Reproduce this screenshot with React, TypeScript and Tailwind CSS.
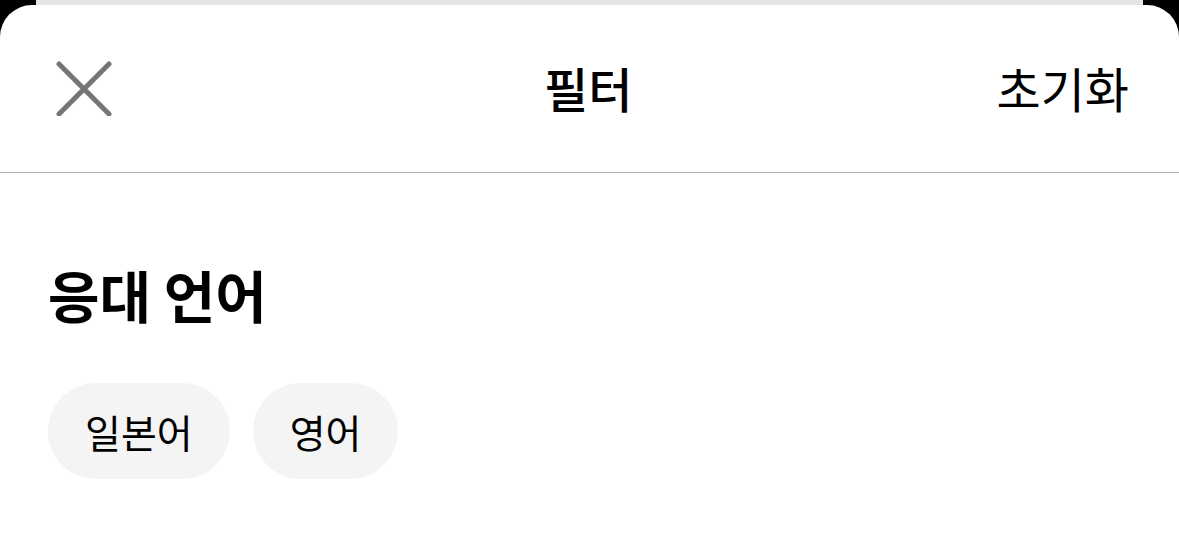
const font = { fontFamily: '"Noto Sans CJK KR", "Noto Sans", sans-serif' };

const languages = ['일본어', '영어'];

function CloseIcon() {
  return (
    <svg width="56" height="56" viewBox="0 0 56 56" fill="none">
      <path d="M3 4L53 54M53 4L3 54" stroke="#757575" strokeWidth="5" strokeLinecap="round" />
    </svg>
  );
}

export default function App() {
  return (
    <div className="w-[1179px] h-[542px] bg-black overflow-hidden flex flex-col" style={font}>
      <div className="mx-[36px] h-[5px] bg-[#e5e5e5] shrink-0" />
      <div className="flex-1 bg-white rounded-t-[32px] flex flex-col">
        <div className="h-[168px] flex items-center justify-between pl-[56px] pr-[50px] border-b border-[#b0b0b0]">
          <button className="w-[56px] h-[56px] flex items-center justify-center -mt-[2px]">
            <CloseIcon />
          </button>
          <h1 className="text-[48px] font-medium text-black ml-[68px] -mt-[4px]">필터</h1>
          <button className="text-[48px] text-black -mt-[4px]">초기화</button>
        </div>
        <div className="px-[48px] pt-[93px]">
          <h2 className="text-[56px] font-bold text-black leading-none">응대 언어</h2>
          <div className="flex gap-[23px] mt-[61px]">
            {languages.map(lang => (
              <button
                key={lang}
                className="h-[96px] px-[37px] rounded-full bg-[#f4f4f4] text-[39px] text-black"
              >
                {lang}
              </button>
            ))}
          </div>
        </div>
      </div>
    </div>
  );
}
